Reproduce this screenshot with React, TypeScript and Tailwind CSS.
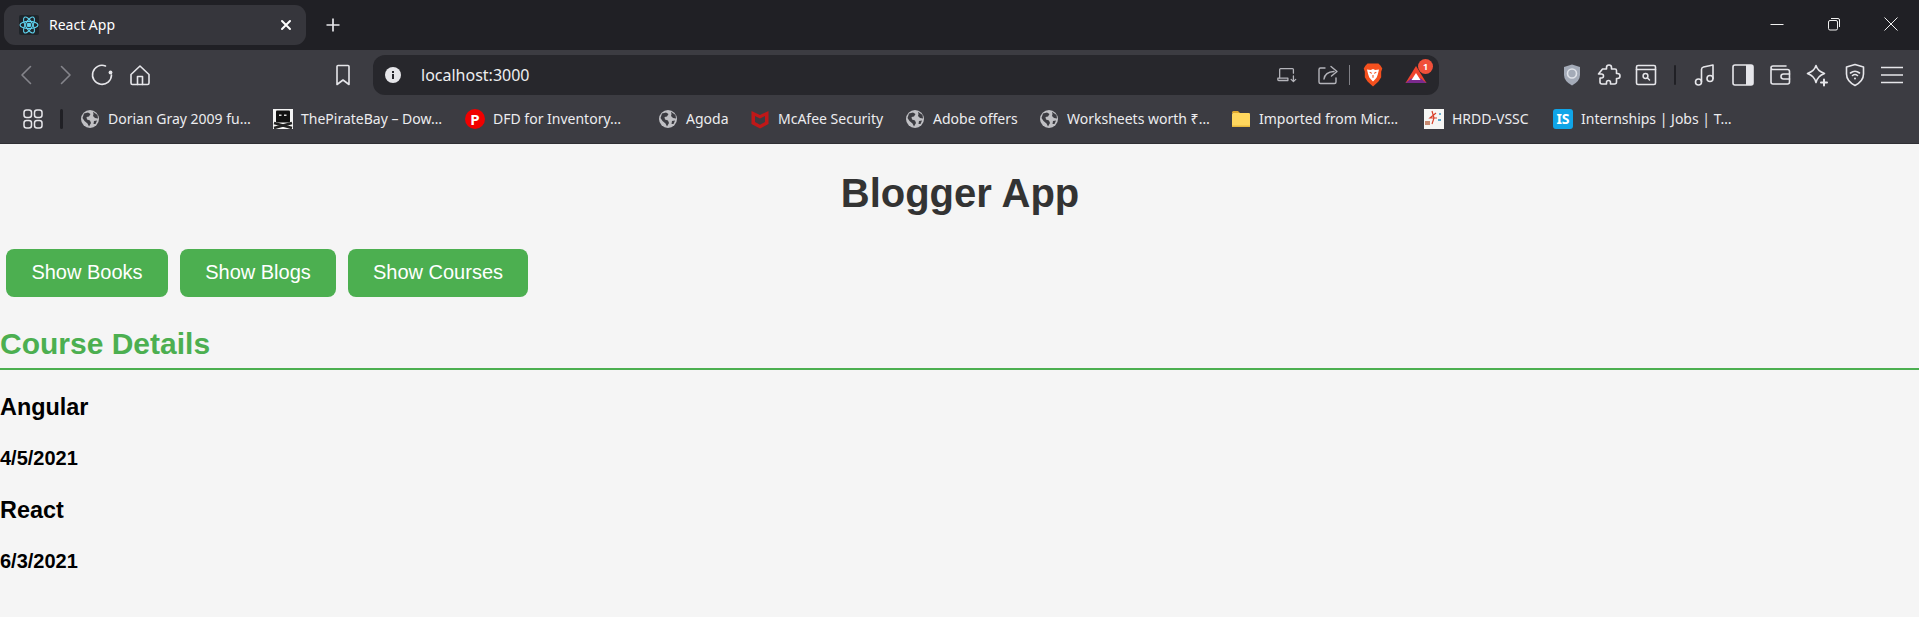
import React from "react";

const S = ({ children, size = 24, vb = "0 0 24 24", sw = 1.6, color = "#e6e6ea" }: { children: React.ReactNode; size?: number; vb?: string; sw?: number; color?: string }) => (
  <svg width={size} height={size} viewBox={vb} fill="none" stroke={color} strokeWidth={sw} strokeLinecap="round" strokeLinejoin="round">
    {children}
  </svg>
);

const Globe = () => (
  <svg width="18" height="18" viewBox="0 0 18 18">
    <circle cx="9" cy="9" r="9" fill="#c0c0c4" />
    <path d="M3 3.5 L7 2.5 L9.5 4 L8 6.5 L5.5 7 L6 9.5 L9 10.5 L10 13 L8 16.5 L6.5 13.5 L3.5 11 L1.5 8 Z" fill="#3c3c42" />
    <path d="M12 1.8 L16.5 5 L17 8.5 L14 8 L12 6 L12.5 4 Z" fill="#3c3c42" />
    <path d="M13 11 L16 10.5 L14.5 14 L12.5 14 Z" fill="#3c3c42" />
  </svg>
);

const Pirate = () => (
  <svg width="20" height="20" viewBox="0 0 20 20">
    <rect width="20" height="20" fill="#f4f4f4" />
    <rect x="3" y="1.5" width="14" height="12" rx="1" fill="#111" />
    <rect x="6" y="5.5" width="2.5" height="1.5" fill="#ddd" />
    <rect x="11" y="5.5" width="2.5" height="1.5" fill="#ddd" />
    <path d="M1 14 L19 19 M19 14 L1 19" stroke="#222" strokeWidth="2.6" />
  </svg>
);

const McAfee = () => (
  <svg width="18" height="20" viewBox="0 0 18 20">
    <path d="M0.5 2 L9 6 L17.5 2 V15 L9 19.5 L0.5 15 Z M4 7 V13 L9 15.8 L14 13 V7 L9 9.5 Z" fill="#c01818" fillRule="evenodd" />
  </svg>
);

const Folder = () => (
  <svg width="20" height="20" viewBox="0 0 20 20">
    <path d="M1 3.5 Q1 2 2.5 2 H7 L9 4 H1 Z" fill="#e0a92e" />
    <rect x="1" y="4" width="18" height="14" rx="1.2" fill="#ffd75e" />
    <rect x="1" y="16.5" width="18" height="1.5" fill="#e8b93e" />
  </svg>
);

const Hrdd = () => (
  <svg width="20" height="20" viewBox="0 0 20 20">
    <rect width="20" height="20" fill="#f6f6f4" />
    <path d="M8 2 L10 9 L8 15 M12 4 L6 9 L13 9" stroke="#d8402a" strokeWidth="1.2" fill="none" />
    <rect x="1" y="12" width="5" height="4" fill="#c98a70" />
    <rect x="14" y="10" width="3" height="2" fill="#5aa5c8" />
    <rect x="15" y="4" width="2" height="2" fill="#6fb0d0" />
  </svg>
);

const marks = [
  { cls: "w-[193px]", label: "Dorian Gray 2009 fu…", icon: <Globe /> },
  { cls: "w-[192px]", label: "ThePirateBay – Dow…", icon: <Pirate /> },
  {
    cls: "w-[193px]",
    label: "DFD for Inventory…",
    icon: <span className="flex h-5 w-5 items-center justify-center rounded-full bg-[#f00000] text-[15px] font-bold leading-none text-white">P</span>,
  },
  { cls: "w-[92px]", label: "Agoda", icon: <Globe /> },
  { cls: "w-[155px]", label: "McAfee Security", icon: <McAfee /> },
  { cls: "w-[134px]", label: "Adobe offers", icon: <Globe /> },
  { cls: "w-[192px]", label: "Worksheets worth ₹…", icon: <Globe /> },
  { cls: "w-[193px]", label: "Imported from Micr…", icon: <Folder /> },
  { cls: "w-[129px]", label: "HRDD-VSSC", icon: <Hrdd /> },
  {
    cls: "w-[180px]",
    label: "Internships | Jobs | T…",
    icon: <span className="flex h-5 w-5 items-center justify-center rounded-[3px] bg-[#10a5e8] text-[14px] font-bold leading-none text-white">IS</span>,
  },
];

const Slot = ({ w, children }: { w: string; children: React.ReactNode }) => (
  <div className={`flex shrink-0 items-center justify-center ${w}`}>{children}</div>
);

export default function App() {
  return (
    <div className="min-h-[617px] bg-[#f5f5f5] font-['Liberation_Sans',sans-serif]">
      <div className="font-['Noto_Sans',sans-serif] text-[#e9e9ec]">
        {/* Tab strip */}
        <div className="flex h-[50px] items-start bg-[#202025]">
          <div className="ml-[4px] mt-[5px] flex h-[40px] w-[302px] items-center rounded-[11px] bg-[#36363c] pl-[15px]">
            <div className="flex h-5 w-5 items-center justify-center rounded-[2px] bg-[#20252a]">
              <svg width="20" height="20" viewBox="0 0 20 20" fill="none" stroke="#5fd3ef" strokeWidth="1.1">
                <circle cx="10" cy="10" r="1.8" fill="#5fd3ef" />
                <ellipse cx="10" cy="10" rx="9" ry="3.6" />
                <ellipse cx="10" cy="10" rx="9" ry="3.6" transform="rotate(60 10 10)" />
                <ellipse cx="10" cy="10" rx="9" ry="3.6" transform="rotate(120 10 10)" />
              </svg>
            </div>
            <span className="ml-[10px] text-[14px] leading-none text-white">React App</span>
            <svg className="ml-auto mr-[14px]" width="12" height="12" viewBox="0 0 12 12" stroke="#ffffff" strokeWidth="2" strokeLinecap="round">
              <path d="M2 2 L10 10 M10 2 L2 10" />
            </svg>
          </div>
          <div className="ml-[15px] flex h-[50px] items-center">
            <svg width="24" height="24" viewBox="0 0 24 24" stroke="#e6e6ea" strokeWidth="1.7">
              <path d="M12 5.5 V18.5 M5.5 12 H18.5" />
            </svg>
          </div>
          <div className="ml-auto flex h-[48px] items-center">
            <Slot w="w-[57px]">
              <svg width="14" height="14" viewBox="0 0 14 14" stroke="#f0f0f0" strokeWidth="1"><path d="M0.5 7.5 H13.5" /></svg>
            </Slot>
            <Slot w="w-[57px]">
              <svg width="14" height="14" viewBox="0 0 14 14" fill="none" stroke="#f0f0f0" strokeWidth="1">
                <rect x="1.5" y="3.5" width="9" height="9.5" rx="1.5" />
                <path d="M4 1.5 H11 Q12.5 1.5 12.5 3 V10" />
              </svg>
            </Slot>
            <Slot w="w-[57px]">
              <svg width="14" height="14" viewBox="0 0 14 14" stroke="#f0f0f0" strokeWidth="1"><path d="M0.5 0.5 L13.5 13.5 M13.5 0.5 L0.5 13.5" /></svg>
            </Slot>
          </div>
        </div>

        {/* Toolbar */}
        <div className="flex h-[45px] items-end bg-[#3c3c42] pl-[8px]">
          <div className="flex h-[40px] items-center">
            <Slot w="w-[38px]"><S color="#85858b"><path d="M15.5 3.5 L7 12 L15.5 20.5" /></S></Slot>
            <Slot w="w-[38px]"><S color="#85858b"><path d="M8.5 3.5 L17 12 L8.5 20.5" /></S></Slot>
            <Slot w="w-[36px]">
              <S>
                <path d="M15.5 3 A 9.5 9.5 0 1 0 21.5 12" />
                <circle cx="20.5" cy="9.5" r="1.9" fill="#e6e6ea" stroke="none" />
              </S>
            </Slot>
            <Slot w="w-[40px]">
              <S>
                <path d="M3 11.5 L12 3 L21 11.5 V20 Q21 21.5 19.5 21.5 H4.5 Q3 21.5 3 20 Z" />
                <path d="M9.5 21.5 V13.5 H14.5 V21.5" />
              </S>
            </Slot>
            <div className="ml-[164px]" />
            <Slot w="w-[38px]">
              <S><path d="M6 3.5 Q6 2.5 7 2.5 H17 Q18 2.5 18 3.5 V21.5 L12 17 L6 21.5 Z" /></S>
            </Slot>
          </div>
          <div className="ml-[11px] flex h-[40px] w-[1066px] items-center rounded-[12px] bg-[#27272c]">
            <Slot w="w-[40px]">
              <svg width="16" height="16" viewBox="0 0 16 16">
                <circle cx="8" cy="8" r="8" fill="#e6e6ea" />
                <rect x="7" y="7" width="2" height="5" fill="#27272c" />
                <rect x="7" y="4" width="2" height="2" fill="#27272c" />
              </svg>
            </Slot>
            <span className="ml-[8px] text-[16px] leading-none text-[#eeeef0]">localhost:3000</span>
            <div className="ml-auto flex items-center pr-[8px]">
              <Slot w="w-[30px]">
                <S size={22} color="#b4b4ba" sw={1.4}>
                  <path d="M4 15 V6 Q4 5 5 5 H18 Q19 5 19 6 V10" />
                  <path d="M2 15.5 H13 V18 H3 Q2 18 2 17 Z" />
                  <path d="M19 13 V19 M16.5 16.8 L19 19.2 L21.5 16.8" />
                </S>
              </Slot>
              <div className="ml-[11px]">
                <Slot w="w-[30px]">
                  <S size={24} color="#b4b4ba" sw={1.4}>
                    <path d="M9 5 H4.5 Q3 5 3 6.5 V19 Q3 20.5 4.5 20.5 H18.5 Q20 20.5 20 19 V15" />
                    <path d="M8 16 Q9 9 18 8.5" />
                    <path d="M15 3.5 L21 8.5 L15.5 13" />
                  </S>
                </Slot>
              </div>
              <div className="ml-[6px] h-[20px] w-[1px] bg-[#808086]" />
              <div className="ml-[8px]">
                <Slot w="w-[30px]">
                  <svg width="20" height="24" viewBox="0 0 18 22">
                    <path d="M4 0.5 H14 L16 2.5 L17.5 5 L16.5 8 L16.5 13 L14 17 L9 21.5 L4 17 L1.5 13 L1.5 8 L0.5 5 L2 2.5 Z" fill="#f4501e" />
                    <path d="M3.5 6 L7 6.5 L9 5.5 L11 6.5 L14.5 6 L13.5 10 L12.5 13 L11 15 L9 17 L7 15 L5.5 13 L4.5 10 Z" fill="#ffffff" />
                    <path d="M6 8.5 L8 9.5 M12 8.5 L10 9.5 M9 11 V13.5" stroke="#f4501e" strokeWidth="1" />
                  </svg>
                </Slot>
              </div>
              <div className="relative ml-[13px]">
                <Slot w="w-[30px]">
                  <svg width="22" height="20" viewBox="0 0 22 20">
                    <path d="M11 1 L21.5 18 H0.5 Z" fill="#f0442c" />
                    <path d="M0.5 18 L6 13.5 H16 L21.5 18 Z" fill="#7b2a8e" />
                    <path d="M11 8 L15.5 15 H6.5 Z" fill="#ffffff" />
                  </svg>
                </Slot>
                <span className="absolute right-[-2px] top-[-6px] flex h-[15px] w-[15px] items-center justify-center rounded-full bg-[#f0503a] text-[9px] font-bold leading-none text-white">1</span>
              </div>
            </div>
          </div>
          <div className="ml-[114px] flex h-[40px] items-center">
            <Slot w="w-[37px]">
              <svg width="18" height="22" viewBox="0 0 18 22">
                <path d="M9 0.5 L17 3 V11 Q17 17 9 21.5 Q1 17 1 11 V3 Z" fill="#a4abb8" />
                <circle cx="9" cy="9.5" r="4.5" fill="none" stroke="#dfe2e8" strokeWidth="1.6" />
              </svg>
            </Slot>
            <Slot w="w-[37px]">
              <S>
                <path d="M9.5 4.5 Q9.5 2 12 2 Q14.5 2 14.5 4.5 V6 H18 Q19.5 6 19.5 7.5 V10.5 H20.5 Q23 10.5 23 13 Q23 15.5 20.5 15.5 H19.5 V19 Q19.5 21 17.5 21 H13.5 V19.5 Q13.5 17.5 11.5 17.5 Q9.5 17.5 9.5 19.5 V21 H5 Q3 21 3 19 V15 H4.5 Q6.5 15 6.5 13 Q6.5 11 4.5 11 H1.5 L5.5 6 H9.5 Z" />
              </S>
            </Slot>
            <Slot w="w-[37px]">
              <S>
                <rect x="2.5" y="2.5" width="19" height="19" rx="1.5" />
                <path d="M2.5 6.5 H21.5" />
                <circle cx="11.5" cy="13" r="2.4" strokeWidth="1.5" />
                <path d="M13.5 15 L15.5 17" strokeWidth="1.5" />
              </S>
            </Slot>
            <Slot w="w-[22px]"><div className="h-[20px] w-[2px] rounded-full bg-[#202025]" /></Slot>
            <Slot w="w-[38px]">
              <S>
                <path d="M8.5 18.5 V6.5 Q8.5 4.5 10.5 4 L20 2 V15.5" />
                <circle cx="5.5" cy="19" r="3" />
                <circle cx="17" cy="15.5" r="3" />
              </S>
            </Slot>
            <Slot w="w-[37px]">
              <svg width="22" height="22" viewBox="0 0 22 22" fill="none">
                <rect x="1" y="1" width="20" height="20" rx="2" stroke="#e6e6ea" strokeWidth="1.6" />
                <rect x="14" y="1" width="7" height="20" fill="#e6e6ea" />
              </svg>
            </Slot>
            <Slot w="w-[37px]">
              <S>
                <path d="M3 6.5 V19 Q3 21 5 21 H19.5 Q21.5 21 21.5 19 V8.5 Q21.5 6.5 19.5 6.5 H5 Q3 6.5 3 5 Q3 3 5 3 H18" />
                <path d="M21.5 11 H15.5 Q13 11 13 13.5 Q13 16 15.5 16 H21.5" />
              </S>
            </Slot>
            <Slot w="w-[38px]">
              <S>
                <path d="M11 2.5 Q12.5 8 19.5 10.5 Q12.5 13 11 19.5 Q9.5 13 2.5 10.5 Q9.5 8 11 2.5 Z" />
                <path d="M19 16.5 V22.5 M16 19.5 H22" strokeWidth="2" />
              </S>
            </Slot>
            <Slot w="w-[37px]">
              <S>
                <path d="M12 1.5 L20.5 4 V11 Q20.5 18 12 22.5 Q3.5 18 3.5 11 V4 Z" />
                <path d="M7.5 10 Q12 6.5 16.5 10 M9.5 12.5 Q12 10.5 14.5 12.5" />
                <circle cx="12" cy="15.5" r="1" fill="#e6e6ea" stroke="none" />
              </S>
            </Slot>
            <Slot w="w-[38px]">
              <S size={22} vb="0 0 22 22">
                <path d="M0.5 3.5 H21.5 M0.5 11 H21.5 M0.5 18.5 H21.5" />
              </S>
            </Slot>
          </div>
        </div>

        {/* Bookmarks */}
        <div className="flex h-[49px] items-center border-b-[1px] border-[#2f2f34] bg-[#3c3c42] pl-[23px]">
          <svg width="20" height="20" viewBox="0 0 20 20" fill="none" stroke="#e6e6ea" strokeWidth="1.5" className="shrink-0">
            <rect x="1" y="1" width="7.5" height="7.5" rx="2.5" />
            <rect x="11.5" y="1" width="7.5" height="7.5" rx="2.5" />
            <rect x="1" y="11.5" width="7.5" height="7.5" rx="2.5" />
            <rect x="11.5" y="11.5" width="7.5" height="7.5" rx="2.5" />
          </svg>
          <div className="ml-[17px] h-[20px] w-[3px] shrink-0 rounded-full bg-[#202025]" />
          <div className="ml-[17px] flex">
            {marks.map((m) => (
              <div key={m.label} className={`flex shrink-0 items-center ${m.cls}`}>
                <div className="flex h-5 w-5 shrink-0 items-center justify-center">{m.icon}</div>
                <span className="ml-[8px] whitespace-nowrap text-[14px] leading-none text-[#ececef]">{m.label}</span>
              </div>
            ))}
          </div>
        </div>
      </div>

      {/* Page */}
      <h1 className="mt-[26px] pl-[1px] text-center text-[40px] font-bold leading-[46px] text-[#333333]">Blogger App</h1>
      <div className="mt-[33px] flex gap-[12px] pl-[6px]">
        <button className="h-[48px] w-[162px] rounded-[8px] bg-[#4caf50] pb-[2px] text-[20px] text-white">Show Books</button>
        <button className="h-[48px] w-[156px] rounded-[8px] bg-[#4caf50] pb-[2px] text-[20px] text-white">Show Blogs</button>
        <button className="h-[48px] w-[180px] rounded-[8px] bg-[#4caf50] pb-[2px] text-[20px] text-white">Show Courses</button>
      </div>
      <h2 className="mt-[31px] border-b-[2px] border-[#4caf50] pb-[8px] text-[30px] font-bold leading-[32px] text-[#4caf50]">Course Details</h2>
      <h3 className="mt-[24px] text-[23.4px] font-bold leading-[27px] text-black">Angular</h3>
      <h4 className="mt-[26px] text-[20px] font-bold leading-[23px] text-black">4/5/2021</h4>
      <h3 className="mt-[27px] text-[23.4px] font-bold leading-[27px] text-black">React</h3>
      <h4 className="mt-[26px] text-[20px] font-bold leading-[23px] text-black">6/3/2021</h4>
    </div>
  );
}
